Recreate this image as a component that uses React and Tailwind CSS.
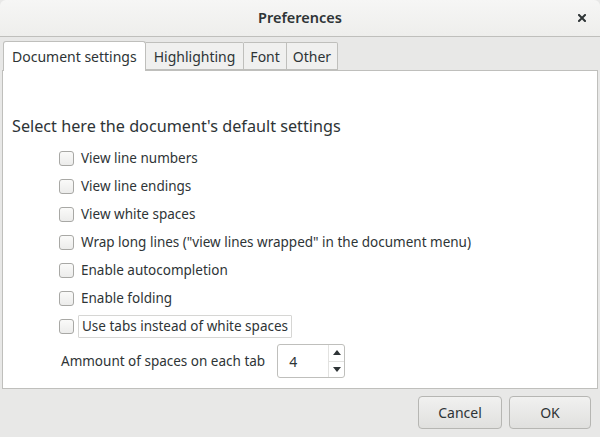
import React from "react";

const Check = ({ label, focus }) => (
  <div className="flex items-center h-[28px]">
    <div className="w-[15px] h-[15px] rounded-[3px] border border-[#a8a8a5] bg-gradient-to-b from-[#fafaf9] to-[#ececeb] shrink-0" />
    {focus ? (
      <span className="ml-[4px] px-[3px] h-[23px] flex items-center border border-[#d6d6d4] rounded-[1px]">{label}</span>
    ) : (
      <span className="ml-[7px]">{label}</span>
    )}
  </div>
);

export default function App() {
  return (
    <div
      className="w-[600px] h-[437px] bg-[#e8e8e7] text-[#2e3436] flex flex-col overflow-hidden"
      style={{ fontFamily: "'Noto Sans', sans-serif" }}
    >
      <div className="h-[37px] shrink-0 bg-gradient-to-b from-[#f6f6f5] to-[#eeeeec] border-b border-[#bfbfbc] rounded-t-[6px] flex items-center justify-center relative">
        <span className="text-[14.5px] font-semibold">Preferences</span>
        <svg className="absolute left-[578px] top-[14px]" width="8" height="8" viewBox="0 0 8 8">
          <path d="M1 1 L7 7 M7 1 L1 7" stroke="#2e3436" strokeWidth="2" strokeLinecap="square" />
        </svg>
      </div>
      <div className="flex-1 flex flex-col px-[2px] pt-[3px]">
        <div className="flex items-end h-[30px] pl-[1px] text-[14px]">
          <div className="h-[30px] px-[8px] bg-white border border-b-0 border-[#bfbfbc] rounded-t-[3px] flex items-center relative z-10 -mb-px">Document settings</div>
          <div className="h-[28px] px-[8px] bg-[#f0f0ef] border border-l-0 border-[#bfbfbc] rounded-tr-[2px] flex items-center">Highlighting</div>
          <div className="h-[28px] px-[6px] bg-[#f0f0ef] border border-l-0 border-[#bfbfbc] flex items-center">Font</div>
          <div className="h-[28px] px-[6px] bg-[#f0f0ef] border border-l-0 border-[#bfbfbc] rounded-tr-[2px] flex items-center">Other</div>
        </div>
        <div className="h-[319px] bg-white border border-[#bfbfbc] pl-[9px] pt-[43px] text-[13.5px]">
          <div className="text-[16.2px] h-[24px] flex items-center">Select here the document's default settings</div>
          <div className="pl-[47px] pt-[6px] flex flex-col">
            <Check label="View line numbers" />
            <Check label="View line endings" />
            <Check label="View white spaces" />
            <Check label={'Wrap long lines ("view lines wrapped" in the document menu)'} />
            <Check label="Enable autocompletion" />
            <Check label="Enable folding" />
            <Check label="Use tabs instead of white spaces" focus />
            <div className="flex items-center mt-[4px] ml-[2px]">
              <span>Ammount of spaces on each tab</span>
              <div className="ml-[12px] w-[68px] h-[34px] border border-[#bfbfbc] rounded-[3px] flex">
                <div className="flex-1 pl-[11px] flex items-center text-[14px]">4</div>
                <div className="w-[16px] border-l border-[#e2e2e0] flex flex-col">
                  <div className="flex-1 flex items-center justify-center border-b border-[#e2e2e0]">
                    <svg width="8" height="5" viewBox="0 0 8 5"><path d="M0 5 L4 0 L8 5Z" fill="#2e3436" /></svg>
                  </div>
                  <div className="flex-1 flex items-center justify-center">
                    <svg width="8" height="5" viewBox="0 0 8 5"><path d="M0 0 L4 5 L8 0Z" fill="#2e3436" /></svg>
                  </div>
                </div>
              </div>
            </div>
          </div>
        </div>
        <div className="flex justify-end gap-[7px] pt-[7px] pr-[7px] text-[14px]">
          <button className="w-[84px] h-[33px] rounded-[4px] border border-[#b6b6b3] bg-gradient-to-b from-[#f1f1f0] to-[#e0e0de]">Cancel</button>
          <button className="w-[82px] h-[33px] rounded-[4px] border border-[#b6b6b3] bg-gradient-to-b from-[#f1f1f0] to-[#e0e0de]">OK</button>
        </div>
      </div>
    </div>
  );
}
